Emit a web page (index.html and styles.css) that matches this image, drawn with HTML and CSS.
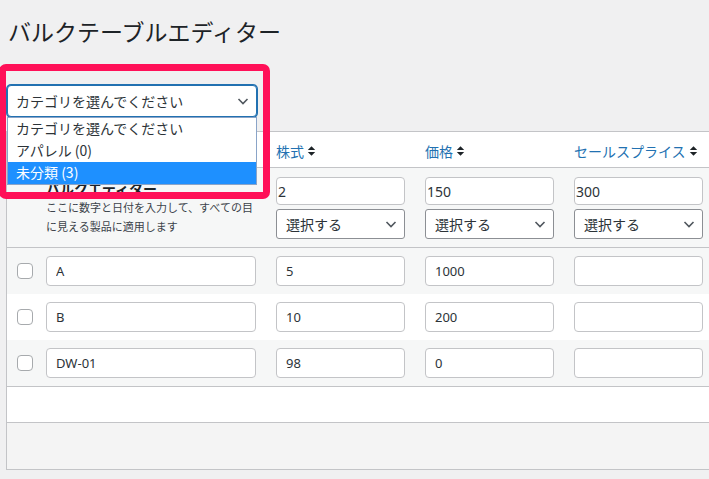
FILE: index.html
```html
<!DOCTYPE html>
<html lang="ja">
<head>
<meta charset="utf-8">
<title>バルクテーブルエディター</title>
<link rel="stylesheet" href="styles.css">
</head>
<body>
<div class="wrap">
  <h1 class="title">バルクテーブルエディター</h1>

  <div class="filter">
    <div class="cat-select">
      <span>カテゴリを選んでください</span>
      <svg class="chev" width="14" height="14" viewBox="0 0 14 14"><polyline points="2.5,5 7,9.5 11.5,5" fill="none" stroke="#50575e" stroke-width="1.6"/></svg>
    </div>
    <ul class="cat-list">
      <li>カテゴリを選んでください</li>
      <li>アパレル&nbsp;(0)</li>
      <li class="sel">未分類&nbsp;(3)</li>
    </ul>
  </div>

  <div class="tbl">
    <div class="row head">
      <div class="cell"><span class="cb"></span></div>
      <div class="cell"></div>
      <div class="cell"><span class="hlabel">株式</span><svg class="sort" width="9" height="12" viewBox="0 0 9 12"><path d="M4.5 1.2 L8.2 5 H0.8 Z M0.8 7 H8.2 L4.5 10.8 Z" fill="#1d2327"/></svg></div>
      <div class="cell"><span class="hlabel">価格</span><svg class="sort" width="9" height="12" viewBox="0 0 9 12"><path d="M4.5 1.2 L8.2 5 H0.8 Z M0.8 7 H8.2 L4.5 10.8 Z" fill="#1d2327"/></svg></div>
      <div class="cell"><span class="hlabel">セールスプライス</span><svg class="sort" width="9" height="12" viewBox="0 0 9 12"><path d="M4.5 1.2 L8.2 5 H0.8 Z M0.8 7 H8.2 L4.5 10.8 Z" fill="#1d2327"/></svg></div>
      <div class="cell"></div>
    </div>

    <div class="row bulk">
      <div class="cell"></div>
      <div class="cell info">
        <div class="bulk-title">バルクエディター</div>
        <p class="bulk-desc">ここに数字と日付を入力して、すべての目に見える製品に適用します</p>
      </div>
      <div class="cell stack">
        <input class="bin" type="text" value="2">
        <div class="bsel"><span>選択する</span><svg class="chev" width="14" height="14" viewBox="0 0 14 14"><polyline points="2.5,5 7,9.5 11.5,5" fill="none" stroke="#50575e" stroke-width="1.6"/></svg></div>
      </div>
      <div class="cell stack">
        <input class="bin" type="text" value="150">
        <div class="bsel"><span>選択する</span><svg class="chev" width="14" height="14" viewBox="0 0 14 14"><polyline points="2.5,5 7,9.5 11.5,5" fill="none" stroke="#50575e" stroke-width="1.6"/></svg></div>
      </div>
      <div class="cell stack">
        <input class="bin" type="text" value="300">
        <div class="bsel"><span>選択する</span><svg class="chev" width="14" height="14" viewBox="0 0 14 14"><polyline points="2.5,5 7,9.5 11.5,5" fill="none" stroke="#50575e" stroke-width="1.6"/></svg></div>
      </div>
      <div class="cell"></div>
    </div>

    <div class="row item alt">
      <div class="cell"><span class="cb"></span></div>
      <div class="cell"><input class="rin" type="text" value="A"></div>
      <div class="cell"><input class="rin" type="text" value="5"></div>
      <div class="cell"><input class="rin" type="text" value="1000"></div>
      <div class="cell"><input class="rin" type="text" value=""></div>
      <div class="cell"></div>
    </div>
    <div class="row item">
      <div class="cell"><span class="cb"></span></div>
      <div class="cell"><input class="rin" type="text" value="B"></div>
      <div class="cell"><input class="rin" type="text" value="10"></div>
      <div class="cell"><input class="rin" type="text" value="200"></div>
      <div class="cell"><input class="rin" type="text" value=""></div>
      <div class="cell"></div>
    </div>
    <div class="row item alt last">
      <div class="cell"><span class="cb"></span></div>
      <div class="cell"><input class="rin" type="text" value="DW-01"></div>
      <div class="cell"><input class="rin" type="text" value="98"></div>
      <div class="cell"><input class="rin" type="text" value="0"></div>
      <div class="cell"><input class="rin" type="text" value=""></div>
      <div class="cell"></div>
    </div>
    <div class="row empty"></div>
    <div class="row foot"></div>
  </div>

  <div class="highlight"></div>
</div>
</body>
</html>
```

FILE: styles.css
```css
* { box-sizing: border-box; }

html, body {
  margin: 0;
  padding: 0;
  background: #f0f0f1;
  overflow: hidden;
}

body {
  font-family: "Noto Sans", "Noto Sans CJK JP", sans-serif;
  color: #2c3338;
  font-size: 14px;
}

.wrap {
  position: relative;
  padding-left: 6px;
  width: 709px;
  height: 479px;
}

.title {
  margin: 0 0 0 2px;
  padding-top: 17px;
  font-family: "Noto Sans CJK JP", sans-serif;
  font-size: 23px;
  font-weight: 400;
  line-height: 29px;
  color: #1d2327;
}

.filter {
  position: relative;
  margin: 39px 0 0 1px;
  width: 250px;
}

.cat-select {
  height: 32px;
  border: 1px solid #2271b1;
  box-shadow: 0 0 0 1px #2271b1;
  border-radius: 4px;
  background: #fff;
  display: flex;
  align-items: center;
  justify-content: space-between;
  padding: 0 6px 0 8px;
  font-family: "Noto Sans CJK JP", sans-serif;
  font-size: 14px;
  color: #2c3338;
}

.chev { display: block; }

.cat-list {
  position: absolute;
  z-index: 5;
  top: 100%;
  left: 0;
  width: 250px;
  margin: 0;
  padding: 0;
  list-style: none;
  background: #fff;
  border: 1px solid #8aa4c8;
  font-family: "Noto Sans CJK JP", sans-serif;
  font-size: 14px;
}

.cat-list li {
  height: 22px;
  line-height: 20px;
  padding-left: 8px;
  color: #2c3338;
}

.cat-list li.sel {
  background: #1e90ff;
  color: #fff;
}

.tbl {
  margin-top: 14px;
  width: 827px;
  border: 1px solid #c3c4c7;
  background: #fff;
}

.row {
  display: grid;
  grid-template-columns: 29px 230px 149px 149px 149px 119px;
}

.cell {
  padding: 0 10px;
  display: flex;
  align-items: center;
}

.head {
  height: 36px;
  border-bottom: 1px solid #c3c4c7;
  background: #fff;
}

.head .cell { padding-top: 2px; }

.hlabel {
  font-family: "Noto Sans CJK JP", sans-serif;
  font-size: 14px;
  color: #2271b1;
  white-space: nowrap;
}

.sort { margin-left: 3px; flex: none; }

.cb {
  display: block;
  width: 16px;
  height: 16px;
  flex: none;
  border: 1px solid #a7aaad;
  border-radius: 4px;
  background: #fff;
}

.bulk {
  height: 80px;
  border-bottom: 1px solid #c3c4c7;
  background: #f6f7f7;
}

.bulk .info {
  display: block;
  padding-top: 11px;
}

.bulk-title {
  font-family: "Noto Sans CJK JP", sans-serif;
  font-size: 14px;
  font-weight: 600;
  line-height: 19px;
  color: #1d2327;
}

.bulk-desc {
  margin: 0;
  font-family: "Noto Sans CJK JP", sans-serif;
  font-size: 11px;
  line-height: 19px;
  color: #3c434a;
}

.stack {
  flex-direction: column;
  align-items: stretch;
  justify-content: flex-start;
  padding-top: 9px;
  gap: 4px;
}

.bin {
  height: 28px;
  margin: 0;
  padding: 0 1px;
  border: 1px solid #c3c4c7;
  border-radius: 4px;
  background: #fff;
  font-family: "Noto Sans", sans-serif;
  font-size: 14px;
  color: #2c3338;
  outline: none;
}

.bsel {
  height: 30px;
  border: 1px solid #8c8f94;
  border-radius: 3px;
  background: #fff;
  display: flex;
  align-items: center;
  justify-content: space-between;
  padding: 0 6px 0 9px;
  font-family: "Noto Sans CJK JP", sans-serif;
  font-size: 14px;
  color: #2c3338;
}

.item {
  height: 46px;
  background: #fff;
}

.item.alt { background: #f6f7f7; }

.item.last { border-bottom: 1px solid #c3c4c7; height: 47px; }

.rin {
  width: 100%;
  height: 30px;
  margin: 0;
  padding: 0 9px;
  border: 1px solid #c3c4c7;
  border-radius: 4px;
  background: #fff;
  font-family: "Noto Sans", sans-serif;
  font-size: 13px;
  color: #2c3338;
  outline: none;
}

.empty {
  height: 36px;
  border-bottom: 1px solid #c3c4c7;
  background: #fff;
}

.foot {
  height: 46px;
  background: #f4f4f4;
}

.highlight {
  position: absolute;
  z-index: 10;
  left: -1px;
  top: 64px;
  width: 271px;
  height: 135px;
  border: 7px solid #ff1058;
  border-radius: 7px;
  pointer-events: none;
}
```
